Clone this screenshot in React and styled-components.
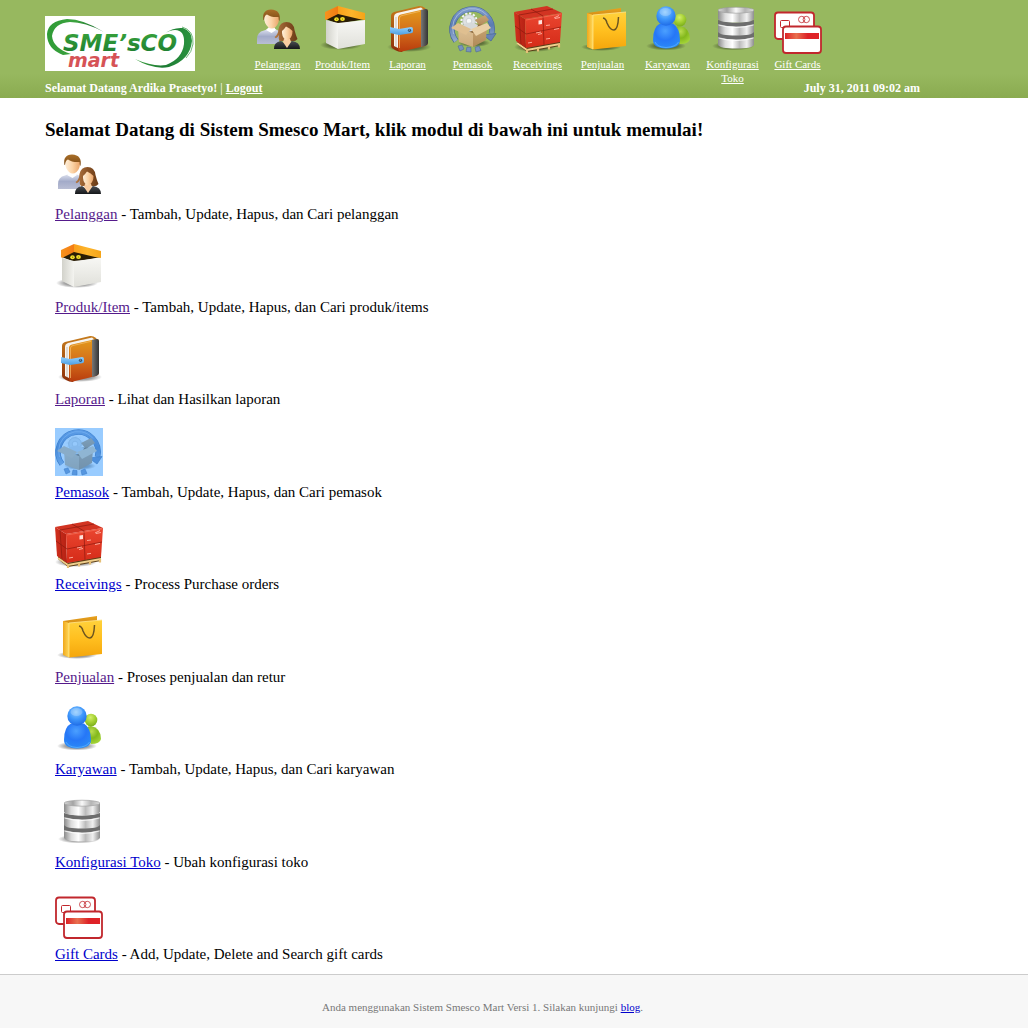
import React from "react";
import styled, { createGlobalStyle } from "styled-components";

const GlobalStyle = createGlobalStyle`
  * { box-sizing: border-box; }
  body {
    margin: 0;
    background: #f7f7f7;
    color: #000;
    font-family: "Liberation Serif", "Times New Roman", serif;
    font-size: 15px;
    line-height: 20px;
  }
`;

const Container = styled.div`
  max-width: 920px;
  padding-left: 45px;
`;

const Header = styled.header`
  background: linear-gradient(#97b85f 0, #97b85f 75%, #8aab50 100%);
  color: #fff;
  font-size: 11px;
  line-height: 14px;
  padding: 5px 0 3px;
`;

const HeaderTop = styled.div`
  display: flex;
  align-items: flex-start;
  gap: 50px;
`;

const LogoBox = styled.a`
  flex: none;
  margin-top: 11px;
  background: #fff;
`;

const ModuleBar = styled.nav`
  display: flex;
`;

const ModuleItem = styled.a`
  display: flex;
  flex-direction: column;
  align-items: center;
  gap: 4px;
  width: 65px;
  color: #fff;
  text-align: center;
`;

const StatusRow = styled.div`
  display: flex;
  justify-content: space-between;
  font-size: 12px;
  font-weight: bold;
  margin-top: -4px;
  a { color: #fff; }
`;

const Divider = styled.span`
  font-weight: normal;
`;

const Main = styled.main`
  background: #fff;
  padding: 20px 0 10px;
`;

const Title = styled.h1`
  margin: 0;
  font-size: 19px;
  line-height: 24px;
`;

const ModuleList = styled.ul`
  list-style: none;
  margin: 8px 0 0;
  padding: 0 10px;
`;

const ModuleRow = styled.li`
  padding-bottom: 18px;
  &:nth-child(odd) { padding-bottom: 19px; }
  &:last-child { padding-bottom: 0; }
`;

const IconFrame = styled.span`
  display: block;
  position: relative;
  width: 48px;
  height: 48px;
  margin-bottom: 6px;
  &::after {
    content: "";
    position: absolute;
    inset: 0;
    background: ${(p) => (p.$selected ? "rgba(51, 153, 255, 0.5)" : "transparent")};
  }
`;

const ModuleLink = styled.a`
  color: ${(p) => (p.$visited ? "#551a8b" : "#0000cc")};
`;

const Footer = styled.footer`
  border-top: 1px solid #ccc;
  color: #777;
  font-size: 11px;
  line-height: 14px;
  text-align: center;
  padding: 25px 0 14px;
  a { color: #0000cc; }
`;

const Defs = styled.svg`
  display: block;
  width: 0;
  height: 0;
`;

const Drawing = styled.svg`
  display: block;
  overflow: visible;
`;

const Gradient = ({ id, stops, across }) => (
  <linearGradient id={id} x1="0" y1="0" x2={across ? 1 : 0} y2={across ? 0 : 1}>
    {stops.map((c, i) => (
      <stop key={i} offset={i / (stops.length - 1)} stopColor={c} />
    ))}
  </linearGradient>
);

const Ball = ({ id, stops }) => (
  <radialGradient id={id} cx="0.45" cy="0.3" r="0.75">
    {stops.map((c, i) => (
      <stop key={i} offset={i / (stops.length - 1)} stopColor={c} />
    ))}
  </radialGradient>
);

const SharedGradients = () => (
  <Defs aria-hidden="true">
    <defs>
      <Gradient id="skin" across stops={["#fff0dc", "#fbd3a6", "#eaa468"]} />
      <Gradient id="hairMan" stops={["#a96f28", "#7a4816"]} />
      <Gradient id="hairWoman" across stops={["#b57a45", "#8c5528", "#6a3b16"]} />
      <Gradient id="shirt" stops={["#dfe3f0", "#a3abc9", "#b9bed4"]} />
      <Gradient id="suit" stops={["#4b4f55", "#15171a"]} />
      <Gradient id="lidLeft" across stops={["#f7931e", "#f47b13"]} />
      <Gradient id="lidRight" across stops={["#f9a01b", "#fdb52b", "#f5a418"]} />
      <Gradient id="boxLeft" across stops={["#d2d2cb", "#f4f4f0"]} />
      <Gradient id="boxRight" stops={["#f7f7f4", "#e0e0da"]} />
      <Gradient id="cover" stops={["#e39a1b", "#d4701b", "#b93c0d"]} />
      <Gradient id="coverBack" stops={["#c77d1d", "#8c2e08"]} />
      <Gradient id="strip" across stops={["#777", "#333"]} />
      <Gradient id="clasp" stops={["#8fd0ff", "#4d9ee2"]} />
      <Gradient id="ring" stops={["#7e9bcb", "#5c7cb2", "#93abcf"]} />
      <Gradient id="cartonLight" stops={["#dcc096", "#cdab7b"]} />
      <Gradient id="cartonDark" stops={["#c9a575", "#b08a58"]} />
      <Gradient id="crate" stops={["#ea4630", "#d52b18"]} />
      <Gradient id="crateSide" across stops={["#d2301e", "#b42113"]} />
      <Gradient id="bag" stops={["#ffd23c", "#ffbf1f", "#f5a60c"]} />
      <Gradient id="bagSide" across stops={["#f0a71b", "#ffd95a"]} />
      <Gradient id="bagBack" stops={["#e9a21d", "#c57e10"]} />
      <Gradient id="metal" across stops={["#8b8b8b", "#dcdcdc", "#ffffff", "#bcbcbc", "#f0f0f0", "#8e8e8e"]} />
      <Gradient id="metalTop" across stops={["#d8d8d8", "#a4a4a4", "#f9f9f9", "#b4b4b4", "#dedede"]} />
      <Gradient id="band" across stops={["#dd2227", "#e8704f", "#dd2227", "#e02327"]} />
      <Gradient id="swooshLeft" across stops={["#2f9b36", "#3ca33f", "#14602a"]} />
      <Gradient id="swooshRight" across stops={["#39a03c", "#1c7a33", "#2b9440"]} />
      <Gradient id="brandGreen" stops={["#3aa53c", "#1b7a30"]} />
      <Ball id="blueBall" stops={["#8ccaff", "#3e97fb", "#1b66e4"]} />
      <Ball id="blueBody" stops={["#4ba0ff", "#2677f7", "#2b8cf6"]} />
      <Ball id="greenBall" stops={["#d3ee6c", "#a5d133", "#76ab18"]} />
      <Ball id="greenBody" stops={["#b9dc4f", "#83b81c", "#a8d83c"]} />
      <radialGradient id="shade">
        <stop offset="0" stopColor="#000" stopOpacity="0.55" />
        <stop offset="0.6" stopColor="#000" stopOpacity="0.35" />
        <stop offset="1" stopColor="#000" stopOpacity="0" />
      </radialGradient>
    </defs>
  </Defs>
);

const Icon = ({ children }) => (
  <Drawing width="48" height="48" viewBox="0 0 48 48" aria-hidden="true">
    {children}
  </Drawing>
);

const CustomersIcon = () => (
  <Icon>
    <path d="M3 39V34Q3 27 10 25.500L14 24H21L25 26V39Z" fill="url(#shirt)" />
    <path d="M12 25L15 22H20L22 25L17.500 28Z" fill="#fff" />
    <path d="M10 12Q10 7 17.500 7Q25 7 25 13Q25 19 21.500 22Q17.500 25 14 22Q10 18 10 12Z" fill="url(#skin)" />
    <path d="M9.500 15Q7.500 5 17 4.500Q27.500 5 25.500 16Q24.500 15 24.500 12Q17 12.500 13 9.500Q10.500 10 10 15Z" fill="url(#hairMan)" />
    <path d="M25 30Q22 35 20.500 32Q24 30 24.500 24Q26 17 32.500 17Q39.500 17 40.500 25Q42 31 43.500 34Q41 37 37 36H27Q24 36 25 30Z" fill="url(#hairWoman)" />
    <path d="M20 44Q19.500 37.500 27 36L33 40L38 36Q46 37 46 44Z" fill="url(#suit)" />
    <path d="M30 34H36L37 37L33 43L29 37Z" fill="#f9cda2" />
    <path d="M28 26Q30 24.500 32 21.500Q36 23 38.500 26Q38.500 32 34.500 35Q32.500 36 31 34.500Q27.500 31 28 26Z" fill="url(#skin)" />
  </Icon>
);

const ItemsIcon = () => (
  <Icon>
    <ellipse cx="22" cy="40" rx="21" ry="5" fill="url(#shade)" />
    <path d="M7 14L19 6L46 14L19 19Z" fill="#2a1d05" />
    <path d="M7 15L19 18V44L7 38Z" fill="url(#boxLeft)" />
    <path d="M19 18L46 15V39L19 44Z" fill="url(#boxRight)" />
    <path d="M6 7L19 1V9L7 15L6 14Z" fill="url(#lidLeft)" />
    <path d="M19 1L46 8V15L40 14L19 9Z" fill="url(#lidRight)" />
    <ellipse cx="17.500" cy="14.200" rx="2.300" ry="2" fill="#f4e02a" />
    <ellipse cx="23.500" cy="14" rx="2.400" ry="2" fill="#f4e02a" />
    <circle cx="17.700" cy="14.200" r="0.600" fill="#756b00" />
    <circle cx="23.500" cy="14" r="0.600" fill="#756b00" />
  </Icon>
);

const ReportsIcon = () => (
  <Icon>
    <ellipse cx="25" cy="42" rx="22" ry="5" fill="url(#shade)" />
    <path d="M7 11Q7 8 10 7L35 1Q38 .5 41 3L43 6L18 47Q14 47 11 45L8 43Q7 42 7 40Z" fill="url(#coverBack)" />
    <path d="M10 12Q10 9 13 8L37 2.500L40 5V40L16 44L10 41Z" fill="#f7f4ef" />
    <path d="M12 12V42" stroke="#b9aca0" strokeWidth=".7" />
    <path d="M14 13Q14 10 17 9.500L41 4Q44 3.500 44 6V38Q44 40 41 41L18 46.500Q14 47 14 43Z" fill="url(#cover)" />
    <path d="M37 5L41 4Q44 3.500 44 6V38Q44 40 41 41L37 42Z" fill="url(#strip)" />
    <path d="M15.500 43V13Q15.500 11 18 10.500L36 6.300" fill="none" stroke="#f6bd6d" strokeWidth=".7" />
    <path d="M6 22L15 24L27 22Q29 22 29 24V26.500Q29 28 27 28.300L15 30L6 28Z" fill="url(#clasp)" />
    <circle cx="25.500" cy="25.300" r="1.600" fill="#285072" />
    <circle cx="25.300" cy="25" r=".6" fill="#b8dafa" />
  </Icon>
);

const SuppliersIcon = () => (
  <Icon>
    <ellipse cx="25" cy="38" rx="16" ry="4" fill="url(#shade)" />
    <g fill="none">
      <path d="M7 36A20 20 0 1 1 42.500 29" stroke="#46659a" strokeWidth="5.600" />
      <path d="M7 36A20 20 0 1 1 42.500 29" stroke="url(#ring)" strokeWidth="4.400" />
      <path d="M4.500 29A19.500 19.500 0 0 1 38 10.500" stroke="#b0c3e2" strokeWidth=".8" />
    </g>
    <path d="M34 30L47 28.500L42 36Z" fill="#6684b8" stroke="#46659a" strokeWidth=".7" />
    <path d="M9 41L13 40L15 44L11 46ZM18 42L22 42.500V47L17 46.500ZM26 42.500L30 41L32 45.500L27 47Z" fill="#7892be" stroke="#4d6a99" strokeWidth=".6" />
    <circle cx="20" cy="16" r="7.300" fill="none" stroke="#f3f4f5" strokeWidth="2.600" strokeDasharray="2.200 1.600" />
    <circle cx="20" cy="16" r="6.400" fill="#dfe2e4" stroke="#b4babe" strokeWidth=".7" />
    <circle cx="20" cy="16" r="2.800" fill="#f7f8f8" stroke="#b9bfc3" strokeWidth=".6" />
    <path d="M26 15L36 10L40 15L31 21Z" fill="url(#cartonDark)" />
    <path d="M10 23L20 19L37 20L24 29Z" fill="#896538" />
    <path d="M12 22Q20 14 29 20L27 25L19 27Z" fill="#d6d9da" />
    <path d="M9 23L24 28V42L10 37Z" fill="url(#cartonLight)" />
    <path d="M24 28L38 20L37 35L24 42Z" fill="url(#cartonDark)" />
    <path d="M2 23L9 18L22 24L17 30Z" fill="#dfbf90" />
    <path d="M22 24L38 18L42 23L27 31Z" fill="#ead0a6" />
  </Icon>
);

const ReceivingsIcon = () => (
  <Icon>
    <ellipse cx="21" cy="42" rx="21" ry="5" fill="url(#shade)" />
    <path d="M3 36V39L13 47L46 41V36L13 43Z" fill="#5b3d16" />
    <path d="M3 38L13 45L46 39" fill="none" stroke="#efd08f" strokeWidth="1.800" />
    <path d="M13 44V48M24 43V46.500M35 41V44.500M45 39V42.500" stroke="#e5bf77" strokeWidth="2.200" />
    <path d="M0 7L11 14L12 43L2 36Z" fill="url(#crateSide)" />
    <path d="M11 14L48 8L46 37L12 43Z" fill="url(#crate)" />
    <path d="M0 7L33 1L48 8L11 14Z" fill="#d23422" />
    <path d="M5 10L39 4M17 4L29 11M1 21L12 29L47 22M29 11L30 40M5 10L7 39" fill="none" stroke="#8c1a0e" strokeWidth=".7" />
    <path d="M12 15L47 9" stroke="#fa7860" strokeWidth=".6" />
    <path d="M24.500 15.500L28 15V19L24.500 19.500Z" fill="#ffe3dc" />
    <path d="M40 13L45 10.500M41 13.500L46 12.500M40 24.500L45 23.500M22 28L27 27M24 29.500L28 28.500M32 20.500L36 20M14 38L18 37.300M32 34L36 33.400" stroke="#ffb6a6" strokeWidth=".9" />
  </Icon>
);

const SalesIcon = () => (
  <Icon>
    <ellipse cx="22" cy="42" rx="20" ry="4" fill="url(#shade)" />
    <path d="M8 8L42 3V12L14 16Z" fill="url(#bagBack)" />
    <path d="M8 8L14 10V44.500L8 42Z" fill="url(#bagSide)" />
    <path d="M14 10L47 7V41L14 44.500Z" fill="url(#bag)" />
    <path d="M14 10V44M14 10L47 7" stroke="#ffe58c" strokeWidth=".8" />
    <path d="M24 13Q27 13.500 28 18Q31 25 35 25Q39 24.500 39.500 12" fill="none" stroke="#6c5520" strokeWidth="1.500" />
  </Icon>
);

const EmployeesIcon = () => (
  <Icon>
    <ellipse cx="22" cy="41" rx="20" ry="4.500" fill="url(#shade)" />
    <path d="M29 30Q30 21 36 21Q46 23 46 34Q45 39 36 39Z" fill="url(#greenBody)" />
    <circle cx="36" cy="15" r="6.300" fill="url(#greenBall)" />
    <path d="M9 35Q9 22 16 18.500H29Q36 23 36 35Q36 43 22 43.500Q9 43 9 35Z" fill="url(#blueBody)" />
    <path d="M11 37Q13 42 22 42.500Q32 42 34.500 37" fill="none" stroke="#61b7ff" strokeWidth="1" opacity=".7" />
    <circle cx="22" cy="11" r="9.700" fill="url(#blueBall)" />
    <ellipse cx="21.500" cy="7" rx="6" ry="4" fill="#fff" opacity=".22" />
  </Icon>
);

const StoreConfigIcon = () => (
  <Icon>
    <ellipse cx="24" cy="41" rx="21" ry="4.500" fill="url(#shade)" />
    <path d="M9 15Q27 20 45 15V36H9Z" fill="#6d6d6d" />
    <path d="M9 32Q27 37 45 32V40Q43 43.500 27 43.500Q11 43.500 9 40Z" fill="url(#metal)" />
    <path d="M9 19Q27 24 45 19V27Q43 30.500 27 30.500Q11 30.500 9 27Z" fill="url(#metal)" />
    <path d="M9 5H45V14Q43 17.500 27 17.500Q11 17.500 9 14Z" fill="url(#metal)" />
    <ellipse cx="27" cy="5.200" rx="18" ry="3" fill="url(#metalTop)" stroke="#999" strokeWidth=".6" />
    <path d="M9.500 20Q27 25 44.500 20M9.500 33Q27 38 44.500 33" fill="none" stroke="#fff" strokeWidth=".8" />
  </Icon>
);

const GiftCardsIcon = () => (
  <Icon>
    <g fill="#fff" stroke="#c1272d">
      <rect x="1" y="7.500" width="39" height="26.500" rx="3" strokeWidth="1.800" />
      <rect x="6.500" y="15.500" width="9" height="7" rx="1" strokeWidth="1" />
      <circle cx="27.700" cy="14.500" r="3.200" fill="none" strokeWidth=".8" />
      <circle cx="32.300" cy="14.500" r="3.200" fill="none" strokeWidth=".8" />
      <rect x="9" y="21.500" width="38" height="26.500" rx="3" strokeWidth="1.800" />
    </g>
    <rect x="11" y="28" width="34" height="6" fill="url(#band)" />
  </Icon>
);

const Logo = () => (
  <Drawing width="150" height="55" viewBox="0 0 150 55" role="img" aria-label="Smesco Mart">
    <path d="M59 16Q38 3 22 3Q3 5 2 18Q2 33 18 39L26 38Q8 32 7 20Q9 7 25 6Q40 6 59 16Z" fill="url(#swooshLeft)" />
    <path d="M119 18Q128 11 138 12Q147 15 147 25Q145 44 124 51Q108 54 90 43Q108 51 121 49Q137 43 139 28Q140 14 130 14Q125 14 119 18Z" fill="url(#swooshRight)" />
    <path d="M137 11Q149 14 148 28Q147 36 141 42" fill="none" stroke="#4ca659" strokeWidth=".8" />
    <g fontFamily="'DejaVu Sans', sans-serif" fontStyle="italic" fontWeight="700">
      <text x="18" y="35" fontSize="23" fill="url(#brandGreen)">SME’sCO</text>
      <text x="23" y="51" fontSize="19" fill="#d65356">mart</text>
    </g>
  </Drawing>
);

const modules = [
  { name: "Pelanggan", text: "Tambah, Update, Hapus, dan Cari pelanggan", Art: CustomersIcon, visited: true },
  { name: "Produk/Item", text: "Tambah, Update, Hapus, dan Cari produk/items", Art: ItemsIcon, visited: true },
  { name: "Laporan", text: "Lihat dan Hasilkan laporan", Art: ReportsIcon, visited: true },
  { name: "Pemasok", text: "Tambah, Update, Hapus, dan Cari pemasok", Art: SuppliersIcon, selected: true },
  { name: "Receivings", text: "Process Purchase orders", Art: ReceivingsIcon },
  { name: "Penjualan", text: "Proses penjualan dan retur", Art: SalesIcon, visited: true },
  { name: "Karyawan", text: "Tambah, Update, Hapus, dan Cari karyawan", Art: EmployeesIcon },
  { name: "Konfigurasi Toko", text: "Ubah konfigurasi toko", Art: StoreConfigIcon },
  { name: "Gift Cards", text: "Add, Update, Delete and Search gift cards", Art: GiftCardsIcon },
];

export default function App() {
  return (
    <>
      <GlobalStyle />
      <SharedGradients />
      <Header>
        <Container>
          <HeaderTop>
            <LogoBox href="#home"><Logo /></LogoBox>
            <ModuleBar>
              {modules.map(({ name, Art }) => (
                <ModuleItem key={name} href="#module">
                  <Art />
                  <span>{name}</span>
                </ModuleItem>
              ))}
            </ModuleBar>
          </HeaderTop>
          <StatusRow>
            <span>
              Selamat Datang Ardika Prasetyo! <Divider>|</Divider> <a href="#logout">Logout</a>
            </span>
            <time dateTime="2011-07-31T09:02">July 31, 2011 09:02 am</time>
          </StatusRow>
        </Container>
      </Header>
      <Main>
        <Container>
          <Title>Selamat Datang di Sistem Smesco Mart, klik modul di bawah ini untuk memulai!</Title>
          <ModuleList>
            {modules.map(({ name, text, Art, visited, selected }) => (
              <ModuleRow key={name}>
                <IconFrame $selected={selected}><Art /></IconFrame>
                <ModuleLink href="#module" $visited={visited}>{name}</ModuleLink> - {text}
              </ModuleRow>
            ))}
          </ModuleList>
        </Container>
      </Main>
      <Footer>
        <Container>
          Anda menggunakan Sistem Smesco Mart Versi 1. Silakan kunjungi <a href="#blog">blog</a>.
        </Container>
      </Footer>
    </>
  );
}
